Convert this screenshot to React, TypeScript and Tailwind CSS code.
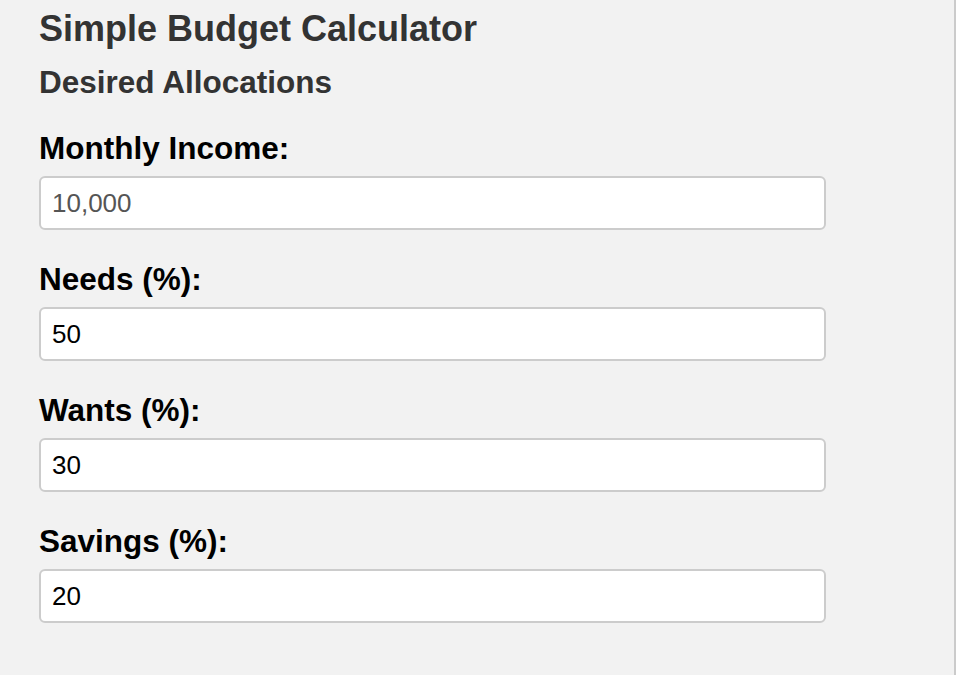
import React, { useState } from 'react';

const fields = [
  { key: 'income', label: 'Monthly Income:', value: '10,000', muted: true },
  { key: 'needs', label: 'Needs (%):', value: '50' },
  { key: 'wants', label: 'Wants (%):', value: '30' },
  { key: 'savings', label: 'Savings (%):', value: '20' },
];

const App: React.FC = () => {
  const [values, setValues] = useState<Record<string, string>>(() =>
    Object.fromEntries(fields.map((f) => [f.key, f.value]))
  );

  return (
    <div className="min-h-screen bg-[#f2f2f2] border-r-2 border-[#cbcbcb] pl-[39px] pt-[9px] font-['Liberation_Sans',Arial,sans-serif]">
      <h2 className="text-[36px] leading-[40px] font-bold text-[#333333]">Simple Budget Calculator</h2>
      <h3 className="mt-[15px] text-[31.5px] leading-[36px] font-bold text-[#333333]">Desired Allocations</h3>

      <div className="mt-[30px] flex flex-col">
        {fields.map((f) => (
          <div key={f.key} className="mb-[31px] flex flex-col">
            <label
              htmlFor={f.key}
              className="mb-[10px] text-[31.5px] leading-[36px] font-bold text-black"
            >
              {f.label}
            </label>
            <input
              id={f.key}
              type="text"
              value={values[f.key]}
              onChange={(e) => setValues({ ...values, [f.key]: e.target.value })}
              className={`w-[787px] h-[54px] px-[11px] bg-white border-2 border-[#cccccc] rounded-[6px] text-[26px] outline-none ${
                f.muted ? 'text-[#555555]' : 'text-black'
              }`}
            />
          </div>
        ))}
      </div>
    </div>
  );
};

export default App;
